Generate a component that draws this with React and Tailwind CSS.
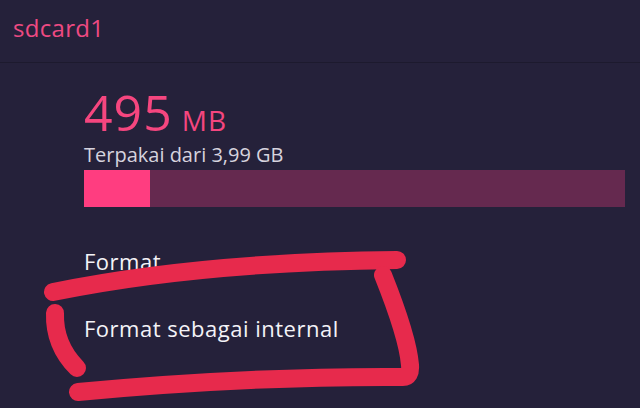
export default function App() {
  const used = 495;
  const total = 3.99 * 1024;
  const pct = (used / total) * 100;

  return (
    <div className="relative w-[640px] h-[408px] overflow-hidden bg-[#25213a] font-['Open_Sans',sans-serif]">
      {/* Header */}
      <div className="h-[63px] px-[13px] flex items-center border-b border-[#1d1a2e]">
        <h1 className="text-[24px] leading-none text-[#ee4a82] -mt-[6px] tracking-[0.3px]">sdcard1</h1>
      </div>

      {/* Storage summary */}
      <div className="pl-[84px] pr-[15px]">
        <div className="flex items-baseline mt-[24px] text-[#f5467f]">
          <span className="text-[50px] leading-none tracking-[1px]">495</span>
          <span className="text-[28px] leading-none ml-[9px] tracking-[1px]">MB</span>
        </div>
        <p className="text-[20px] leading-none text-[#d6d3de] mt-[8px]">Terpakai dari 3,99 GB</p>
        <div className="mt-[5px] h-[37px] bg-[#65294f]">
          <div className="h-full bg-[#ff3d80]" style={{ width: `${pct}%` }} />
        </div>

        {/* Actions */}
        <div className="mt-[43px] flex flex-col gap-[45px] text-[22px] leading-none tracking-[0.5px] text-[#f4f3f7]">
          <div>Format</div>
          <div>Format sebagai internal</div>
        </div>
      </div>

      {/* Hand-drawn highlight */}
      <svg className="absolute inset-0 pointer-events-none" width="640" height="408" viewBox="0 0 640 408" fill="none">
        <g stroke="#e72a4c" strokeWidth="18" strokeLinecap="round" strokeLinejoin="round">
          <path d="M53 292 Q 200 262 397 260" />
          <path d="M383 275 C 395 305, 408 340, 410 365 Q 411 377 403 377 Q 250 376 78 392" />
          <path d="M55 313 Q 54 345 77 368" />
        </g>
      </svg>
    </div>
  );
}
